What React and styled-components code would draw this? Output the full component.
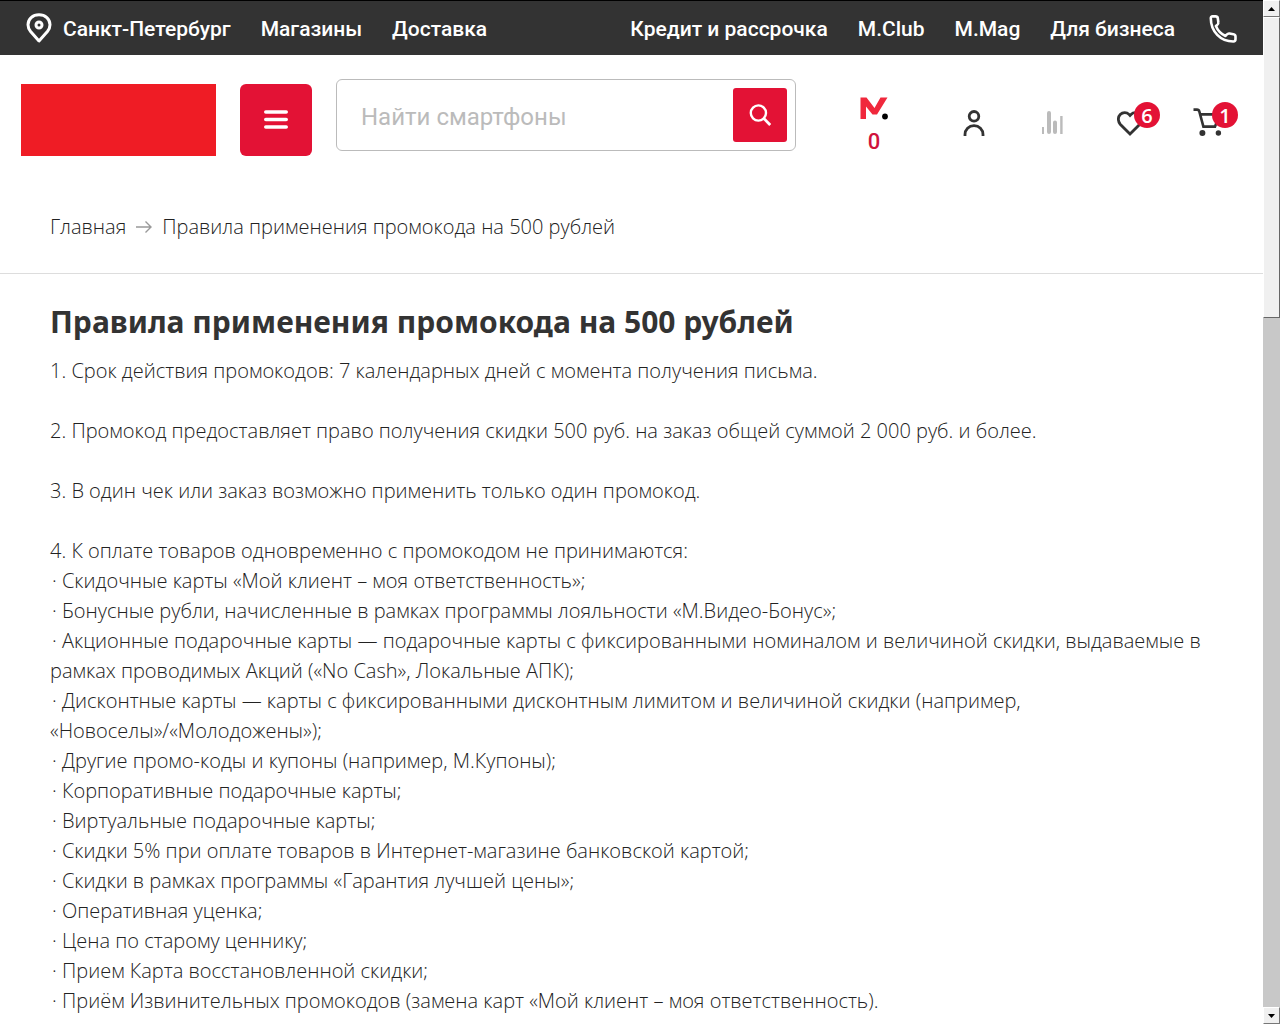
import React, { useState } from 'react';
import styled, { createGlobalStyle } from 'styled-components';

const rules = [
  '1. Срок действия промокодов: 7 календарных дней с момента получения письма.',
  '2. Промокод предоставляет право получения скидки 500 руб. на заказ общей суммой 2 000 руб. и более.',
  '3. В один чек или заказ возможно применить только один промокод.',
];

const excluded = [
  'Скидочные карты «Мой клиент – моя ответственность»;',
  'Бонусные рубли, начисленные в рамках программы лояльности «М.Видео-Бонус»;',
  'Акционные подарочные карты — подарочные карты с фиксированными номиналом и величиной скидки, выдаваемые в рамках проводимых Акций («No Cash», Локальные АПК);',
  'Дисконтные карты — карты с фиксированными дисконтным лимитом и величиной скидки (например, «Новоселы»/«Молодожены»);',
  'Другие промо-коды и купоны (например, М.Купоны);',
  'Корпоративные подарочные карты;',
  'Виртуальные подарочные карты;',
  'Скидки 5% при оплате товаров в Интернет-магазине банковской картой;',
  'Скидки в рамках программы «Гарантия лучшей цены»;',
  'Оперативная уценка;',
  'Цена по старому ценнику;',
  'Прием Карта восстановленной скидки;',
  'Приём Извинительных промокодов (замена карт «Мой клиент – моя ответственность).',
];

const PinIcon = () => (
  <svg width="26" height="30" viewBox="0 0 26 30" fill="none" stroke="#fff" strokeWidth="3" aria-hidden="true">
    <path d="M13 28 L4.6 18.5 C2.8 16.3 2 14.2 2 11.8 C2 6 6.7 1.8 13 1.8 C19.3 1.8 24 6 24 11.8 C24 14.2 23.2 16.3 21.4 18.5 Z" strokeLinejoin="round" />
    <circle cx="13" cy="12" r="3" />
  </svg>
);

const PhoneIcon = () => (
  <svg width="28" height="28" viewBox="0 0 28 28" fill="none" stroke="#fff" strokeWidth="2.6" strokeLinejoin="round" aria-hidden="true">
    <path d="M3.6 1.4 H6.6 C8 1.4 8.6 2 8.8 3.2 L9.3 7.2 C9.5 8.5 9.1 9.4 8.2 10 L6.9 11 C8.8 15.6 11.9 18.9 16.5 21 L17.8 19.5 C18.6 18.6 19.4 18.3 20.5 18.5 L24.4 19.2 C25.8 19.5 26.5 20.3 26.5 21.5 V24 C26.5 25.6 25.6 26.5 24.3 26.5 C11.5 26.5 1.8 16.5 1.8 3.3 C1.8 2.1 2.4 1.4 3.6 1.4 Z" />
  </svg>
);

const MenuIcon = () => (
  <svg width="24" height="20" viewBox="0 0 24 20" stroke="#fff" strokeWidth="3.6" strokeLinecap="round" aria-hidden="true">
    <path d="M1.8 2 H22.2 M1.8 9.5 H22.2 M1.8 17 H22.2" />
  </svg>
);

const SearchIcon = () => (
  <svg width="22" height="22" viewBox="0 0 22 22" fill="none" stroke="#fff" strokeWidth="2.4" aria-hidden="true">
    <circle cx="9.4" cy="9" r="7.6" />
    <path d="M14.8 14.4 L21.2 21" strokeWidth="2.8" />
  </svg>
);

const BonusIcon = () => (
  <svg width="28" height="24" viewBox="0 0 28 24" aria-hidden="true">
    <path d="M0.5 22 V0.5 H6.5 L14.5 11 L20.5 0.5 H27.5 L17 17.5 H12.5 L6 9.5 V22 Z" fill="#f0283c" />
    <circle cx="25" cy="19.5" r="2.9" fill="#000" />
  </svg>
);

const UserIcon = () => (
  <svg width="22" height="28" viewBox="0 0 22 28" fill="none" stroke="#333" strokeWidth="2.8" aria-hidden="true">
    <circle cx="11" cy="7.3" r="4.8" />
    <path d="M2 27 V25.5 C2 20.5 5.8 16.6 11 16.6 C16.2 16.6 20 20.5 20 25.5 V27" />
  </svg>
);

const CompareIcon = () => (
  <svg width="22" height="24" viewBox="0 0 22 24" stroke="#bbb" strokeWidth="4" strokeLinecap="round" aria-hidden="true">
    <path d="M2 16 V23" strokeWidth="2" strokeLinecap="butt" />
    <path d="M8 2 V21 M14 11.5 V21" />
    <path d="M20.4 5 V23" strokeWidth="2.4" strokeLinecap="butt" />
  </svg>
);

const HeartIcon = () => (
  <svg width="26" height="26" viewBox="0 0 26 26" fill="none" stroke="#333" strokeWidth="2.8" aria-hidden="true">
    <path d="M13 24 L3.2 14.2 C0.8 11.5 0.7 7 3.2 4.5 C5.8 1.9 9.6 1.9 12 4.4 L13 5.4 L14 4.4 C16.4 1.9 20.2 1.9 22.8 4.5 C25.3 7 25.2 11.5 22.8 14.2 Z" />
  </svg>
);

const CartIcon = () => (
  <svg width="30" height="30" viewBox="0 0 30 30" fill="none" stroke="#333" strokeWidth="2.6" aria-hidden="true">
    <path d="M0.5 1.6 H4 C5.2 1.6 6 2.3 6.3 3.4 L10.4 18.6 H22 L26.5 6.4 H7" />
    <circle cx="9.4" cy="25" r="3" fill="#333" stroke="none" />
    <circle cx="25.4" cy="25" r="2.7" fill="#333" stroke="none" />
  </svg>
);

const ArrowIcon = () => (
  <svg width="16" height="14" viewBox="0 0 16 14" fill="none" stroke="#999" strokeWidth="1.4" aria-hidden="true">
    <path d="M0 7 H15 M9.5 1.5 L15 7 L9.5 12.5" />
  </svg>
);

const Triangle = ({ down }) => (
  <svg width="7" height="4" viewBox="0 0 7 4" aria-hidden="true">
    <path d={down ? 'M0 0 H7 L3.5 4 Z' : 'M0 4 H7 L3.5 0 Z'} fill="#000" />
  </svg>
);

const App = () => {

  const [query, setQuery] = useState('');

  return (
    <Shell>
      <GlobalStyle />
      <Page>
        <TopBar>
          <TopLinks>
            <CityLink href="#city"><PinIcon />Санкт-Петербург</CityLink>
            <TopLink href="#shops">Магазины</TopLink>
            <TopLink href="#delivery">Доставка</TopLink>
          </TopLinks>
          <TopLinks>
            <TopLink href="#credit">Кредит и рассрочка</TopLink>
            <TopLink href="#club">M.Club</TopLink>
            <TopLink href="#mag">M.Mag</TopLink>
            <TopLink href="#business">Для бизнеса</TopLink>
            <PhoneLink href="#phone" aria-label="Телефон"><PhoneIcon /></PhoneLink>
          </TopLinks>
        </TopBar>
        <Header>
          <Logo href="#home" aria-label="М.Видео" />
          <MenuButton type="button" aria-label="Каталог"><MenuIcon /></MenuButton>
          <SearchForm onSubmit={e => e.preventDefault()}>
            <SearchInput
              aria-label="Поиск"
              placeholder="Найти смартфоны"
              value={query}
              onChange={e => setQuery(e.target.value)}
            />
            <SearchButton type="submit" aria-label="Найти"><SearchIcon /></SearchButton>
          </SearchForm>
          <Actions>
            <BonusLink href="#bonus"><BonusIcon />0</BonusLink>
            <ActionLink href="#account" aria-label="Профиль"><UserIcon /></ActionLink>
            <ActionLink href="#compare" aria-label="Сравнение"><CompareIcon /></ActionLink>
            <ActionLink href="#favorites" aria-label="Избранное"><HeartIcon /><Badge>6</Badge></ActionLink>
            <ActionLink href="#cart" aria-label="Корзина"><CartIcon /><Badge>1</Badge></ActionLink>
          </Actions>
        </Header>
        <Breadcrumbs>
          <Crumb href="#home">Главная</Crumb>
          <ArrowIcon />
          <span>Правила применения промокода на 500 рублей</span>
        </Breadcrumbs>
        <Article>
          <Title>Правила применения промокода на 500 рублей</Title>
          {rules.map(rule => <Rule key={rule}>{rule}</Rule>)}
          <div>4. К оплате товаров одновременно с промокодом не принимаются:</div>
          {excluded.map(item => <Item key={item}>{`· ${item}`}</Item>)}
        </Article>
      </Page>
      <ScrollBar>
        <ScrollArrow type="button" aria-label="Вверх"><Triangle /></ScrollArrow>
        <ScrollTrack><ScrollThumb /></ScrollTrack>
        <ScrollArrow type="button" aria-label="Вниз"><Triangle down /></ScrollArrow>
      </ScrollBar>
    </Shell>
  );
};

export default App;

const GlobalStyle = createGlobalStyle`
  * {
    box-sizing: border-box;
  }

  body {
    margin: 0;
    background: #fff;
    color: #222;
    font-family: "Open Sans", "Noto Sans", sans-serif;
    font-size: 20px;
    font-weight: 330;
    line-height: 30px;
  }

  a {
    color: inherit;
    text-decoration: none;
  }

  button {
    padding: 0;
    cursor: pointer;
  }
`;

const Shell = styled.div`
  display: flex;
  height: 100vh;
  overflow: hidden;
`;

const Page = styled.div`
  flex: 1;
  min-width: 0;
`;

const TopBar = styled.nav`
  display: flex;
  align-items: center;
  justify-content: space-between;
  height: 55px;
  padding: 2px 26px 0;
  border-top: 1px solid #000;
  background: #333;
  color: #fff;
  font-family: Roboto, sans-serif;
  font-size: 21px;
  font-weight: 500;
`;

const TopLinks = styled.div`
  display: flex;
  align-items: center;
  gap: 30px;
`;

const TopLink = styled.a`
  white-space: nowrap;
`;

const CityLink = styled(TopLink)`
  display: flex;
  align-items: center;
  gap: 11px;

  svg {
    margin-bottom: 2px;
  }
`;

const PhoneLink = styled.a`
  display: flex;
  margin-left: 4px;
`;

const Header = styled.header`
  display: flex;
  align-items: flex-end;
  gap: 24px;
  padding: 24px 16px 24px 21px;
`;

const Logo = styled.a`
  width: 195px;
  height: 72px;
  background: #ef1c25;
`;

const RedButton = styled.button`
  display: flex;
  align-items: center;
  justify-content: center;
  border: 0;
  background: #e31235;
`;

const MenuButton = styled(RedButton)`
  width: 72px;
  height: 72px;
  border-radius: 6px;
`;

const SearchForm = styled.form`
  display: flex;
  flex: 1;
  align-items: center;
  height: 72px;
  margin-bottom: 5px;
  padding: 0 8px 0 24px;
  border: 1px solid #bbb;
  border-radius: 6px;
`;

const SearchInput = styled.input`
  flex: 1;
  min-width: 0;
  padding: 3px 0 0;
  border: 0;
  outline: 0;
  color: #333;
  font-family: Roboto, sans-serif;
  font-size: 24px;

  &::placeholder {
    color: #bbb;
  }
`;

const SearchButton = styled(RedButton)`
  width: 54px;
  height: 54px;
  border-radius: 3px;
`;

const Actions = styled.div`
  display: flex;
  align-items: center;
  height: 66px;
`;

const ActionLink = styled.a`
  position: relative;
  display: flex;
  align-items: center;
  justify-content: center;
  width: 78px;
  height: 30px;
`;

const BonusLink = styled.a`
  display: flex;
  flex-direction: column;
  align-items: center;
  gap: 6px;
  width: 108px;
  margin-right: 7px;
  padding-top: 8px;
  color: #d0123c;
  font-family: Roboto, sans-serif;
  font-size: 22px;
  font-weight: 500;
`;

const Badge = styled.span`
  position: absolute;
  top: -6px;
  left: 43px;
  width: 26px;
  height: 26px;
  border-radius: 50%;
  background: #e31235;
  color: #fff;
  font-size: 20px;
  font-weight: 600;
  line-height: 28px;
  text-align: center;
`;

const Breadcrumbs = styled.nav`
  display: flex;
  align-items: center;
  gap: 10px;
  padding: 32px 50px 31px;
  border-bottom: 1px solid #ddd;
`;

const Crumb = styled.a`
  color: #222;
`;

const Article = styled.main`
  padding: 30px 40px 30px 50px;
`;

const Title = styled.h1`
  margin: 0 0 16px;
  color: #333;
  font-family: "Noto Sans", sans-serif;
  font-size: 30px;
  font-weight: 700;
  line-height: 36px;
`;

const Rule = styled.p`
  margin: 0 0 30px;
`;

const Item = styled.div`
  text-indent: 2px;
`;

const ScrollBar = styled.div`
  display: flex;
  flex-direction: column;
  width: 17px;
  background: #c8c8c8;
`;

const ScrollArrow = styled.button`
  display: flex;
  align-items: center;
  justify-content: center;
  height: 17px;
  border: 1px solid;
  border-color: #fff #777 #777 #fff;
  background: #f0f0f0;
`;

const ScrollTrack = styled.div`
  flex: 1;
`;

const ScrollThumb = styled.div`
  height: 301px;
  border: 1px solid;
  border-color: #fff #666 #666 #fff;
  background: #f0f0f0;
`;
